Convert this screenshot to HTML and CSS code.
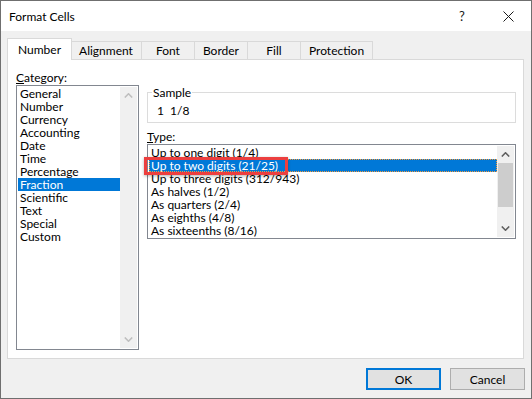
FILE: index.html
```html
<!DOCTYPE html>
<html lang="en">
<head>
    <meta charset="UTF-8">
    <title>Format Cells</title>
    <link rel="stylesheet" href="styles.css">
</head>
<body>
    <div class="window">
        <div class="titlebar">
            <span class="title">Format Cells</span>
            <span class="title-btn">?</span>
            <span class="title-btn">
                <svg width="11" height="11" viewBox="0 0 11 11"><path d="M0.5 0.5 L10.5 10.5 M10.5 0.5 L0.5 10.5" stroke="#1a1a1a" stroke-width="1" fill="none"/></svg>
            </span>
        </div>

        <div class="dialog">
            <div class="tabs">
                <div class="tab active">Number</div>
                <div class="tab">Alignment</div>
                <div class="tab">Font</div>
                <div class="tab">Border</div>
                <div class="tab">Fill</div>
                <div class="tab">Protection</div>
            </div>

            <div class="panel">
                <div class="category">
                    <div class="field-label"><u>C</u>ategory:</div>
                    <div class="listbox category-list">
                        <ul class="items">
                            <li>General</li>
                            <li>Number</li>
                            <li>Currency</li>
                            <li>Accounting</li>
                            <li>Date</li>
                            <li>Time</li>
                            <li>Percentage</li>
                            <li class="selected">Fraction</li>
                            <li>Scientific</li>
                            <li>Text</li>
                            <li>Special</li>
                            <li>Custom</li>
                        </ul>
                        <div class="scrollbar disabled">
                            <span class="arrow">
                                <svg width="9" height="5" viewBox="0 0 9 5"><polyline points="0.8,4.5 4.5,0.8 8.2,4.5" fill="none" stroke-width="1.6"/></svg>
                            </span>
                            <span class="track"></span>
                            <span class="arrow">
                                <svg width="9" height="5" viewBox="0 0 9 5"><polyline points="0.8,0.5 4.5,4.2 8.2,0.5" fill="none" stroke-width="1.6"/></svg>
                            </span>
                        </div>
                    </div>
                </div>

                <div class="details">
                    <fieldset class="sample">
                        <legend>Sample</legend>
                        <div class="sample-value">1  1/8</div>
                    </fieldset>

                    <div class="field-label type-label"><u>T</u>ype:</div>
                    <div class="listbox type-list">
                        <ul class="items">
                            <li>Up to one digit (1/4)</li>
                            <li class="selected focused">Up to two digits (21/25)</li>
                            <li>Up to three digits (312/943)</li>
                            <li>As halves (1/2)</li>
                            <li>As quarters (2/4)</li>
                            <li>As eighths (4/8)</li>
                            <li>As sixteenths (8/16)</li>
                        </ul>
                        <div class="scrollbar">
                            <span class="arrow">
                                <svg width="9" height="5" viewBox="0 0 9 5"><polyline points="0.8,4.5 4.5,0.8 8.2,4.5" fill="none" stroke-width="1.6"/></svg>
                            </span>
                            <span class="track"><span class="thumb"></span></span>
                            <span class="arrow">
                                <svg width="9" height="5" viewBox="0 0 9 5"><polyline points="0.8,0.5 4.5,4.2 8.2,0.5" fill="none" stroke-width="1.6"/></svg>
                            </span>
                        </div>
                        <div class="highlight-box"></div>
                    </div>
                </div>
            </div>

            <div class="buttons">
                <button class="btn default">OK</button>
                <button class="btn">Cancel</button>
            </div>
        </div>
    </div>
</body>
</html>
```

FILE: styles.css
```css
* {
    box-sizing: border-box;
}

body {
    margin: 0;
    font-family: Lato, "Noto Sans", sans-serif;
    font-size: 12px;
    color: #000;
    background: #fff;
}

.window {
    width: 532px;
    height: 399px;
    border: 1px solid #6f6f6f;
    display: flex;
    flex-direction: column;
}

.titlebar {
    height: 30px;
    background: #fff;
    display: flex;
    align-items: center;
}

.title {
    flex: 1;
    padding-left: 8px;
}

.title-btn {
    width: 46px;
    height: 30px;
    display: flex;
    align-items: center;
    justify-content: center;
    font-size: 13px;
    color: #1a1a1a;
}

.dialog {
    flex: 1;
    background: #f0f0f0;
    padding: 7px 7px 0 6px;
}

/* tabs */
.tabs {
    display: flex;
    align-items: flex-end;
    height: 21px;
}

.tab {
    height: 18px;
    min-width: 54px;
    padding: 0 8px;
    border: 1px solid #d9d9d9;
    border-bottom: none;
    margin-left: -1px;
    display: flex;
    align-items: center;
    justify-content: center;
    background: #f0f0f0;
}

.tab.active {
    height: 22px;
    margin-left: 0;
    margin-bottom: -1px;
    padding: 0 10px;
    background: #fff;
    position: relative;
    z-index: 1;
}

.tab.active + .tab {
    border-left: none;
}

.panel {
    height: 300px;
    border: 1px solid #d9d9d9;
    background: #fff;
    display: flex;
    gap: 8px;
    padding: 10px 0 0 8px;
}

.field-label {
    line-height: 15px;
    height: 15px;
}

/* list boxes */
.listbox {
    border: 1px solid #828790;
    background: #fff;
    padding: 1px;
    display: flex;
    position: relative;
}

.category-list {
    width: 123px;
    height: 265px;
}

.items {
    list-style: none;
    margin: 0;
    padding: 0;
    flex: 1;
}

.items li {
    height: 13px;
    line-height: 13px;
    padding-left: 2px;
    white-space: nowrap;
}

.items li.selected {
    background: #0078d7;
    color: #fff;
}

.items li.focused {
    outline: 1px dotted #f39a3c;
    outline-offset: -1px;
}

.scrollbar {
    width: 17px;
    background: #f0f0f0;
    display: flex;
    flex-direction: column;
}

.scrollbar .arrow {
    height: 17px;
    display: flex;
    align-items: center;
    justify-content: center;
}

.scrollbar .arrow svg {
    stroke: #606060;
}

.scrollbar.disabled .arrow svg {
    stroke: #bfbfbf;
}

.scrollbar .track {
    flex: 1;
}

.thumb {
    display: block;
    height: 44px;
    margin: 0 1px;
    background: #cdcdcd;
}

/* right side */
.details {
    width: 369px;
}

.sample {
    margin: 16px 0 0;
    padding: 5px 0 4px 9px;
    border: 1px solid #dcdcdc;
    min-width: 0;
}

.sample legend {
    margin-left: -5px;
    padding: 0 1px;
    line-height: 13px;
}

.sample-value {
    line-height: 14px;
    white-space: pre;
}

.type-label {
    margin-top: 6px;
}

.type-list {
    width: 369px;
    height: 95px;
}

.highlight-box {
    position: absolute;
    left: -4px;
    top: 12px;
    width: 144px;
    height: 18px;
    border: 3px solid #ec3f3f;
    box-shadow: 0 1px 3px rgba(0, 0, 0, 0.3);
}

/* buttons */
.buttons {
    display: flex;
    justify-content: flex-end;
    gap: 9px;
    margin-top: 9px;
    margin-right: -1px;
}

.btn {
    width: 75px;
    height: 22px;
    border: 1px solid #adadad;
    background: #e1e1e1;
    font-family: inherit;
    font-size: 12px;
    color: #000;
    padding: 0;
}

.btn.default {
    border: 2px solid #0078d7;
}
```
